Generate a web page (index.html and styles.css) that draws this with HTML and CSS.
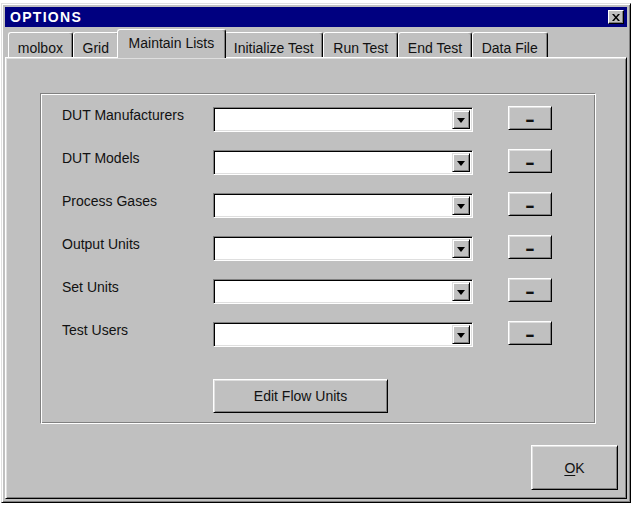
FILE: index.html
```html
<!DOCTYPE html>
<html lang="en">
<head>
  <meta charset="UTF-8" />
  <title>Options</title>
  <link rel="stylesheet" href="styles.css">
</head>
<body>
  <div class="window">
    <div class="titlebar">
      <span class="title">OPTIONS</span>
      <button class="close" aria-label="Close">
        <svg width="8" height="7" viewBox="0 0 8 7"><path d="M0 0h2l2 2.5L6 0h2L5 3.5 8 7H6L4 4.5 2 7H0l3-3.5z" fill="#000"/></svg>
      </button>
    </div>

    <div class="tabs">
      <div class="tab">molbox</div>
      <div class="tab">Grid</div>
      <div class="tab active">Maintain Lists</div>
      <div class="tab">Initialize Test</div>
      <div class="tab">Run Test</div>
      <div class="tab">End Test</div>
      <div class="tab">Data File</div>
    </div>

    <div class="page">
      <div class="group">
        <div class="lists">
          <label class="list-label">DUT Manufacturers</label>
          <div class="combo"><span class="combo-btn"><span class="arrow"></span></span></div>
          <button class="btn minus"><span class="dash">&ndash;</span></button>

          <label class="list-label">DUT Models</label>
          <div class="combo"><span class="combo-btn"><span class="arrow"></span></span></div>
          <button class="btn minus"><span class="dash">&ndash;</span></button>

          <label class="list-label">Process Gases</label>
          <div class="combo"><span class="combo-btn"><span class="arrow"></span></span></div>
          <button class="btn minus"><span class="dash">&ndash;</span></button>

          <label class="list-label">Output Units</label>
          <div class="combo"><span class="combo-btn"><span class="arrow"></span></span></div>
          <button class="btn minus"><span class="dash">&ndash;</span></button>

          <label class="list-label">Set Units</label>
          <div class="combo"><span class="combo-btn"><span class="arrow"></span></span></div>
          <button class="btn minus"><span class="dash">&ndash;</span></button>

          <label class="list-label">Test Users</label>
          <div class="combo"><span class="combo-btn"><span class="arrow"></span></span></div>
          <button class="btn minus"><span class="dash">&ndash;</span></button>
        </div>
        <button class="btn edit-units">Edit Flow Units</button>
      </div>

      <div class="footer">
        <button class="btn ok"><u>O</u>K</button>
      </div>
    </div>
  </div>
</body>
</html>
```

FILE: styles.css
```css
body {
  margin: 0;
  background: #fff;
  font-family: "Liberation Sans", Arial, sans-serif;
  font-size: 14px;
  color: #111;
}

.window {
  margin: 3px 0 0 1px;
  width: 630px;
  height: 500px;
  box-sizing: border-box;
  padding: 3px;
  background: #c0c0c0;
  border: 1px solid;
  border-color: #dfdfdf #000 #000 #dfdfdf;
  box-shadow: inset 1px 1px #fff, inset -1px -1px #808080;
  display: flex;
  flex-direction: column;
}

.titlebar {
  height: 20px;
  background: #000080;
  display: flex;
  align-items: center;
  padding: 0 3px 0 5px;
}

.title {
  color: #fff;
  font-weight: bold;
  font-size: 14px;
  letter-spacing: 1.3px;
}

.close {
  margin-left: auto;
  width: 16px;
  height: 14px;
  padding: 0;
  background: #c0c0c0;
  border: 1px solid;
  border-color: #fff #000 #000 #fff;
  box-shadow: inset -1px -1px #808080;
  display: flex;
  align-items: center;
  justify-content: center;
}

/* tab strip */
.tabs {
  height: 30px;
  display: flex;
  align-items: flex-end;
  padding-left: 3px;
  position: relative;
  z-index: 1;
}

.tab {
  height: 25px;
  box-sizing: border-box;
  padding: 7px 8.8px 0;
  line-height: 16px;
  white-space: nowrap;
  background: #c0c0c0;
  border-top: 1px solid #fff;
  border-left: 1px solid #fff;
  border-right: 1px solid #000;
  border-radius: 3px 3px 0 0;
  box-shadow: inset -1px 0 #808080;
}

.tab.active {
  height: 29px;
  margin: 0 -2px -1px;
  padding-top: 5px;
  padding-left: 10.8px;
  padding-right: 10.8px;
  position: relative;
  z-index: 2;
}

/* tab page */
.page {
  flex: 1;
  box-sizing: border-box;
  padding: 1px;
  border: 1px solid;
  border-color: #fff #000 #000 #fff;
  box-shadow: inset 1px 1px #dfdfdf, inset -1px -1px #808080;
  display: flex;
  flex-direction: column;
}

.group {
  margin: 34px 29px 0 33px;
  padding: 12px 0 10px 21px;
  border: 1px solid;
  border-color: #808080 #fff #fff #808080;
  box-shadow: inset 1px 1px #fff, inset -1px -1px #808080;
}

.lists {
  display: grid;
  grid-template-columns: 151px 295px 44px;
  grid-auto-rows: 26px;
  row-gap: 17px;
}

.list-label {
  margin-top: 1px;
  line-height: 16px;
}

.combo {
  width: 260px;
  height: 25px;
  margin-top: 1px;
  box-sizing: border-box;
  background: #fff;
  border: 1px solid;
  border-color: #808080 #fff #fff #808080;
  box-shadow: inset 1px 1px #000, inset -1px -1px #dfdfdf;
  display: flex;
  justify-content: flex-end;
  padding: 2px;
}

.combo-btn {
  width: 18px;
  box-sizing: border-box;
  background: #c0c0c0;
  border: 1px solid;
  border-color: #dfdfdf #000 #000 #dfdfdf;
  box-shadow: inset 1px 1px #fff, inset -1px -1px #808080;
  display: flex;
  align-items: center;
  justify-content: center;
}

.arrow {
  width: 0;
  height: 0;
  margin-top: 2px;
  border-left: 4px solid transparent;
  border-right: 4px solid transparent;
  border-top: 5px solid #000;
}

.btn {
  font-family: inherit;
  font-size: 14px;
  color: #111;
  padding: 0;
  background: #c0c0c0;
  border: 1px solid;
  border-color: #fff #000 #000 #fff;
  box-shadow: inset 1px 1px #dfdfdf, inset -1px -1px #808080;
}

.minus {
  width: 44px;
  height: 24px;
  font-weight: bold;
  font-size: 15px;
  line-height: 20px;
  padding-top: 2px;
}

.dash {
  display: inline-block;
  transform: scaleY(1.6);
}

.edit-units {
  display: block;
  width: 175px;
  height: 34px;
  margin: 32px 0 0 151px;
}

.footer {
  display: flex;
  justify-content: flex-end;
  padding: 21px 7px 0 0;
}

.ok {
  width: 87px;
  height: 45px;
}

.ok u {
  text-decoration-thickness: 1px;
  text-underline-offset: 2px;
}
```
